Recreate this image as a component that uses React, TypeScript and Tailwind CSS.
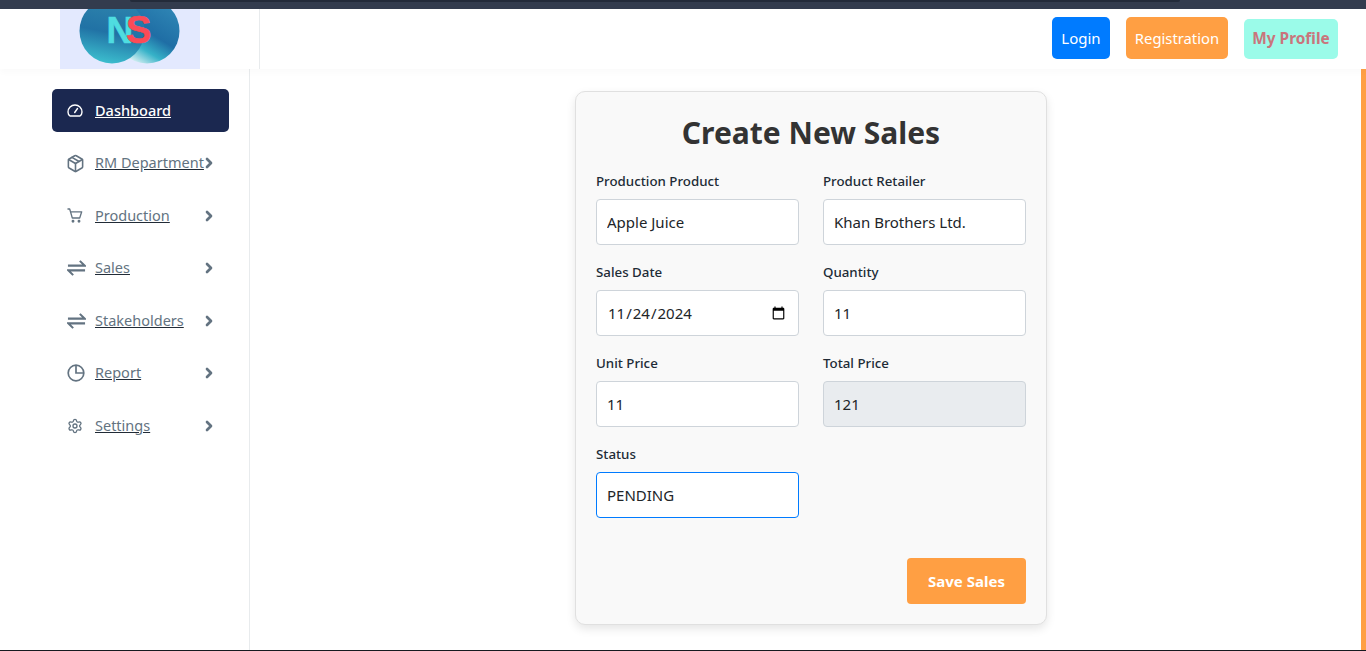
import React from 'react';
import { ChevronRight, LucideIcon, Package, Settings } from 'lucide-react';

const FONT = "font-['Noto_Sans','Open_Sans',sans-serif]";

const SwapIcon = ({ className }: { className?: string }) => (
  <svg viewBox="0 0 20 18" fill="none" stroke="currentColor" strokeWidth="2.2" className={className}>
    <path d="M1 6.5h17.5L13.5 1.5" />
    <path d="M19 11.5H1.5l5 5" />
  </svg>
);

const ReportIcon = ({ className }: { className?: string }) => (
  <svg viewBox="0 0 18 18" fill="none" stroke="currentColor" strokeWidth="1.7" className={className}>
    <circle cx="9" cy="9" r="7.8" />
    <path d="M9 1.2V9h7.8" />
  </svg>
);

const DashIcon = ({ className }: { className?: string }) => (
  <svg viewBox="0 0 16 13" fill="none" stroke="currentColor" strokeWidth="1.4" className={className}>
    <path d="M3 12h10c1.2-.9 2-2.4 2-4a7 7 0 0 0-14 0c0 1.6.8 3.1 2 4z" strokeLinejoin="round" />
    <path d="M7.7 8.5 10.5 4.5" strokeLinecap="round" />
  </svg>
);

const CartIcon = ({ className }: { className?: string }) => (
  <svg viewBox="0 0 16 15" fill="none" stroke="currentColor" strokeWidth="1.3" className={className}>
    <path d="M.5 1h2.2l2.6 9h7.4l2-6.2H3.6" strokeLinejoin="round" />
    <circle cx="6" cy="13.2" r=".8" fill="currentColor" />
    <circle cx="12" cy="13.2" r=".8" fill="currentColor" />
  </svg>
);

type NavItem = {
  label: string;
  icon: LucideIcon | React.FC<{ className?: string }>;
  iconClass: string;
  active?: boolean;
  arrow?: boolean;
};

const navItems: NavItem[] = [
  { label: 'Dashboard', icon: DashIcon, iconClass: 'w-4 h-[13px]', active: true },
  { label: 'RM Department', icon: Package, iconClass: 'w-[19px] h-[19px] -ml-px', arrow: true },
  { label: 'Production', icon: CartIcon, iconClass: 'w-4 h-[15px]', arrow: true },
  { label: 'Sales', icon: SwapIcon, iconClass: 'w-[19px] h-[18px]', arrow: true },
  { label: 'Stakeholders', icon: SwapIcon, iconClass: 'w-[19px] h-[18px]', arrow: true },
  { label: 'Report', icon: ReportIcon, iconClass: 'w-[18px] h-[18px]', arrow: true },
  { label: 'Settings', icon: Settings, iconClass: 'w-4 h-4', arrow: true },
];

const Sidebar = () => (
  <aside className="w-[250px] shrink-0 border-r border-[#e8ebed] pl-[52px] pr-5 pt-5">
    {navItems.map((item) => {
      const Icon = item.icon;
      return (
        <a
          key={item.label}
          href="#"
          className={`flex items-center h-[43px] mb-[9.5px] pl-[15px] pr-[15px] rounded-[5px] text-[14.5px] ${
            item.active ? 'bg-[#1b2850] text-white font-medium' : 'text-[#637381]'
          }`}
        >
          <span className="w-7 shrink-0 flex items-center">
            <Icon className={item.iconClass} />
          </span>
          <span className={`underline whitespace-nowrap ${item.active ? 'decoration-white' : 'decoration-[#212b36]'}`}>
            {item.label}
          </span>
          {item.arrow && (
            <span className="ml-auto w-[10px] shrink-0">
              <ChevronRight className="-ml-[3px] w-4 h-4 text-[#637381]" strokeWidth={4} />
            </span>
          )}
        </a>
      );
    })}
  </aside>
);

const Field = ({
  label,
  value,
  type = 'text',
  disabled,
  focused,
}: {
  label: string;
  value: string;
  type?: string;
  disabled?: boolean;
  focused?: boolean;
}) => (
  <div>
    <label className="block h-[21px] mb-[7px] text-[13.3px] leading-[21px] font-medium text-[#212b36]">{label}</label>
    <input
      type={type}
      defaultValue={value}
      disabled={disabled}
      className={`block w-full h-[46px] px-[10px] rounded-[4px] border text-[15px] text-[#212529] outline-none ${
        disabled ? 'bg-[#e9ecef] border-[#ced4da]' : 'bg-white'
      } ${focused ? 'border-[#007bff]' : disabled ? '' : 'border-[#ced4da]'}`}
    />
  </div>
);

export default function App() {
  return (
    <div className={`${FONT} relative h-[651px] w-[1366px] overflow-hidden bg-white flex flex-col`}>
      {/* browser strip on top */}
      <div className="h-[9px] shrink-0 bg-[#333c4e] px-[130px]">
        <div className="h-[2px] w-[1050px] rounded-b bg-[#232b3a]" />
      </div>

      {/* header */}
      <header className="h-[60px] shrink-0 flex bg-white shadow-[0_4px_6px_rgba(0,0,0,0.02)] z-10">
        <div className="w-[260px] shrink-0 border-r border-[#e8ebed] pl-[60px]">
          <div className="w-[140px] h-[60px] bg-[#e3e9fe]">
            <svg viewBox="0 0 140 60" className="w-[140px] h-[60px]">
              <defs>
                <linearGradient id="left" x1="0.7" y1="0" x2="0.5" y2="1">
                  <stop offset="0" stopColor="#2f86ae" />
                  <stop offset="0.55" stopColor="#2172a5" />
                  <stop offset="1" stopColor="#3bbccd" />
                </linearGradient>
                <linearGradient id="right" x1="0.85" y1="0.1" x2="0.3" y2="1">
                  <stop offset="0" stopColor="#2f86b5" />
                  <stop offset="0.5" stopColor="#1f6ea5" />
                  <stop offset="0.75" stopColor="#36b2c8" />
                  <stop offset="1" stopColor="#e6f6f7" />
                </linearGradient>
              </defs>
              <circle cx="87" cy="22" r="32.5" fill="url(#right)" />
              <circle cx="52" cy="22" r="32.5" fill="url(#left)" />
              <text x="46.5" y="34" fontFamily="Liberation Sans, sans-serif" fontWeight="700" fontSize="37" fill="#4fdde0" stroke="#4fdde0" strokeWidth="0.6">N</text>
              <text x="66" y="34" fontFamily="Liberation Sans, sans-serif" fontWeight="700" fontSize="38" fill="#fb4b57" stroke="#fb4b57" strokeWidth="0.6">S</text>
            </svg>
          </div>
        </div>
        <div className="flex-1 flex items-start justify-end gap-4 pt-2 pr-[28px]">
          <button className="w-[58px] h-[42px] rounded-[5px] bg-[#007bff] text-white text-[15px]">Login</button>
          <button className="w-[102px] h-[42px] rounded-[5px] bg-[#ff9f43] text-white text-[14.8px]">Registration</button>
          <button className="w-[94px] h-[40px] mt-[2px] rounded-[5px] bg-[#9bfbe9] text-[#c9757c] text-[15.4px] font-bold">My Profile</button>
        </div>
      </header>

      {/* body */}
      <div className="flex-1 min-h-0 flex">
        <Sidebar />
        <main className="flex-1 flex justify-center items-start pt-[22px] pl-[6px]">
          <div className="w-[472px] h-[534px] rounded-[10px] border border-[#e0e0e0] bg-[#f9f9f9] px-5 pt-[21px] shadow-[0_4px_10px_rgba(0,0,0,0.1)]">
            <h1 className="text-center text-[30px] leading-[40px] font-bold text-[#333333]">Create New Sales</h1>
            <div className="mt-[18px] grid grid-cols-[203px_203px] gap-x-6 gap-y-[17px]">
              <Field label="Production Product" value="Apple Juice" />
              <Field label="Product Retailer" value="Khan Brothers Ltd." />
              <Field label="Sales Date" value="2024-11-24" type="date" />
              <Field label="Quantity" value="11" />
              <Field label="Unit Price" value="11" />
              <Field label="Total Price" value="121" disabled />
              <Field label="Status" value="PENDING" focused />
            </div>
            <div className="mt-10 flex justify-end">
              <button className="w-[119px] h-[46px] rounded-[4px] bg-[#ff9f43] text-white text-[15px] font-bold">Save Sales</button>
            </div>
          </div>
        </main>
      </div>

      {/* page scrollbar and window edge */}
      <div className="absolute right-0 top-[9px] w-[5px] h-[26px] bg-[#eeeeee]" />
      <div className="absolute right-0 top-[35px] bottom-0 w-[5px] bg-[#ff9f43]" />
      <div className="absolute left-0 right-0 bottom-0 h-px bg-[#16191f]" />
    </div>
  );
}
